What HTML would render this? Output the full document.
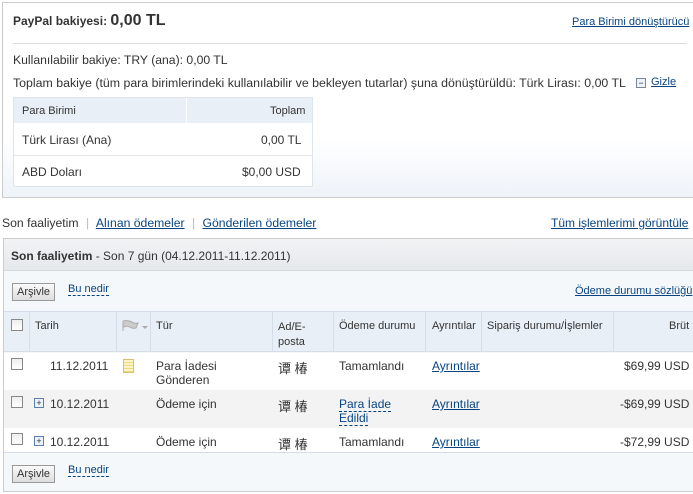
<!DOCTYPE html>
<html><head><meta charset="utf-8"><style>
*{margin:0;padding:0;box-sizing:border-box}
body{width:693px;height:494px;background:#fff;font-family:"Liberation Sans","Noto Sans CJK SC",sans-serif;font-size:12px;color:#333;position:relative;overflow:hidden}
.a{position:absolute;white-space:nowrap}
a,.l{color:#084482;text-decoration:underline}
.d{color:#084482;border-bottom:1px dashed #084482;text-decoration:none}
.cb{position:absolute;width:12px;height:12px;border:1px solid #888;background:linear-gradient(#eee,#fff)}
.btn{position:absolute;border:1px solid #999;background:linear-gradient(#fafafa,#ddd);font-size:11px;padding:2px 4px;height:18px}
.pl{position:absolute;width:10px;height:10px;border:1px solid #5a7fb0;background:#eef3fa;font-size:9px;line-height:8px;text-align:center;color:#234}
.vl{position:absolute;width:1px;background:#d4dde8}
</style></head><body>
<div class="a" style="left:2px;top:2px;width:700px;height:196px;border:1px solid #ccc;background:linear-gradient(#fff 70%,#eef3f9)"></div>
<div class="a" style="left:13px;top:12px;font-size:12px;font-weight:bold;color:#333">PayPal bakiyesi: <span style="font-size:16px">0,00 TL</span></div>
<a class="a" style="left:572px;top:16px;font-size:11px">Para Birimi dönüştürücü</a>
<div class="a" style="left:13px;top:43px;width:674px;height:1px;background:#ddd"></div>
<div class="a" style="left:13px;top:53px;font-size:12.2px">Kullanılabilir bakiye: TRY (ana): 0,00 TL</div>
<div class="a" style="left:13px;top:76px;font-size:12.35px">Toplam bakiye (tüm para birimlerindeki kullanılabilir ve bekleyen tutarlar) şuna dönüştürüldü: Türk Lirası: 0,00 TL</div>
<div class="pl" style="left:636px;top:78px;border-color:#789">−</div>
<a class="a" style="left:651px;top:76px;font-size:11px">Gizle</a>
<div class="a" style="left:13px;top:97px;width:300px;height:90px;border:1px solid #dde4ec;background:#fff"></div>
<div class="a" style="left:14px;top:98px;width:298px;height:25px;background:#e8eff7"></div>
<div class="a" style="left:186px;top:98px;width:1px;height:25px;background:#fff"></div>
<div class="a" style="left:22px;top:105px;font-size:11px">Para Birimi</div>
<div class="a" style="left:270px;top:105px;font-size:11px">Toplam</div>
<div class="a" style="left:22px;top:133px">Türk Lirası (Ana)</div>
<div class="a" style="left:261px;top:133px">0,00 TL</div>
<div class="a" style="left:14px;top:155px;width:298px;height:1px;background:#e3e3e3"></div>
<div class="a" style="left:22px;top:165px">ABD Doları</div>
<div class="a" style="left:242px;top:165px">$0,00 USD</div>

<div class="a" style="left:2px;top:216px;font-size:12.2px">Son faaliyetim <span style="color:#bbb;margin:0 4px">|</span> <a>Alınan ödemeler</a> <span style="color:#bbb;margin:0 4px">|</span> <a>Gönderilen ödemeler</a></div>
<a class="a" style="left:551px;top:216px">Tüm işlemlerimi görüntüle</a>

<div class="a" style="left:3px;top:238px;width:700px;height:254px;border:1px solid #ccc;background:#f5f8fb"></div>
<div class="a" style="left:4px;top:239px;width:700px;height:32px;background:linear-gradient(#f2f3f5,#e5e8eb);border-bottom:1px solid #d6dbe0"></div>
<div class="a" style="left:11px;top:249px"><b>Son faaliyetim</b> - Son 7 gün (04.12.2011-11.12.2011)</div>
<div class="btn" style="left:12px;top:283px">Arşivle</div>
<span class="a d" style="left:68px;top:283px;font-size:11px">Bu nedir</span>
<a class="a" style="left:575px;top:285px;font-size:11px">Ödeme durumu sözlüğü</a>
<div class="a" style="left:4px;top:311px;width:700px;height:41px;background:#e8eff7;border-top:1px solid #d4dde8;border-bottom:1px solid #d4dde8"></div>
<div class="vl" style="left:29px;top:312px;height:40px"></div>
<div class="vl" style="left:116px;top:312px;height:40px"></div>
<div class="vl" style="left:150px;top:312px;height:40px"></div>
<div class="vl" style="left:272px;top:312px;height:40px"></div>
<div class="vl" style="left:333px;top:312px;height:40px"></div>
<div class="vl" style="left:425px;top:312px;height:40px"></div>
<div class="vl" style="left:481px;top:312px;height:40px"></div>
<div class="vl" style="left:613px;top:312px;height:40px"></div>
<div class="cb" style="left:11px;top:319px"></div>
<div class="a" style="left:35px;top:320px;font-size:11px">Tarih</div>
<svg class="a" style="left:122px;top:320px" width="28" height="12"><path d="M1 1 L1 11 M1 1 Q6 0 10 2 Q12 4 16 3 L14 8 Q10 9 6 6 L1 7" fill="#ccc" stroke="#aaa"/><path d="M20 6 L26 6 L23 9Z" fill="#aaa"/></svg>
<div class="a" style="left:156px;top:320px;font-size:11px">Tür</div>
<div class="a" style="left:278px;top:320px;font-size:11px;line-height:15px">Ad/E-<br>posta</div>
<div class="a" style="left:339px;top:320px;font-size:11px">Ödeme durumu</div>
<div class="a" style="left:432px;top:320px;font-size:11px">Ayrıntılar</div>
<div class="a" style="left:487px;top:320px;font-size:11px">Sipariş durumu/İşlemler</div>
<div class="a" style="left:669px;top:320px;font-size:11px">Brüt</div>

<div class="a" style="left:4px;top:353px;width:700px;height:37px;background:#fff"></div>
<div class="a" style="left:4px;top:390px;width:700px;height:38px;background:#f3f3f3"></div>
<div class="a" style="left:4px;top:428px;width:700px;height:25px;background:#fff;border-bottom:1px solid #d4dde8"></div>

<div class="cb" style="left:11px;top:358px"></div>
<div class="a" style="left:50px;top:359px">11.12.2011</div>
<div class="a" style="left:123px;top:359px;width:11px;height:14px;background:repeating-linear-gradient(#fff6c8 0 2px,#f0d880 2px 3px);border:1px solid #d8c070"></div>
<div class="a" style="left:156px;top:359px;line-height:14px">Para İadesi<br>Gönderen</div>
<div class="a" style="left:278px;top:358px;font-size:13px">谭 椿</div>
<div class="a" style="left:339px;top:359px">Tamamlandı</div>
<a class="a" style="left:432px;top:359px">Ayrıntılar</a>
<div class="a" style="left:624px;top:359px">$69,99 USD</div>

<div class="cb" style="left:11px;top:396px"></div>
<div class="pl" style="left:34px;top:398px">+</div>
<div class="a" style="left:50px;top:397px">10.12.2011</div>
<div class="a" style="left:156px;top:397px">Ödeme için</div>
<div class="a" style="left:278px;top:396px;font-size:13px">谭 椿</div>
<div class="a" style="left:339px;top:397px;line-height:14px"><span class="d">Para İade</span><br><span class="d">Edildi</span></div>
<a class="a" style="left:432px;top:397px">Ayrıntılar</a>
<div class="a" style="left:620px;top:397px">-$69,99 USD</div>

<div class="cb" style="left:11px;top:433px"></div>
<div class="pl" style="left:34px;top:436px">+</div>
<div class="a" style="left:50px;top:435px">10.12.2011</div>
<div class="a" style="left:156px;top:435px">Ödeme için</div>
<div class="a" style="left:278px;top:434px;font-size:13px">谭 椿</div>
<div class="a" style="left:339px;top:435px">Tamamlandı</div>
<a class="a" style="left:432px;top:435px">Ayrıntılar</a>
<div class="a" style="left:620px;top:435px">-$72,99 USD</div>

<div class="btn" style="left:12px;top:465px">Arşivle</div>
<span class="a d" style="left:68px;top:464px;font-size:11px">Bu nedir</span>
</body></html>
